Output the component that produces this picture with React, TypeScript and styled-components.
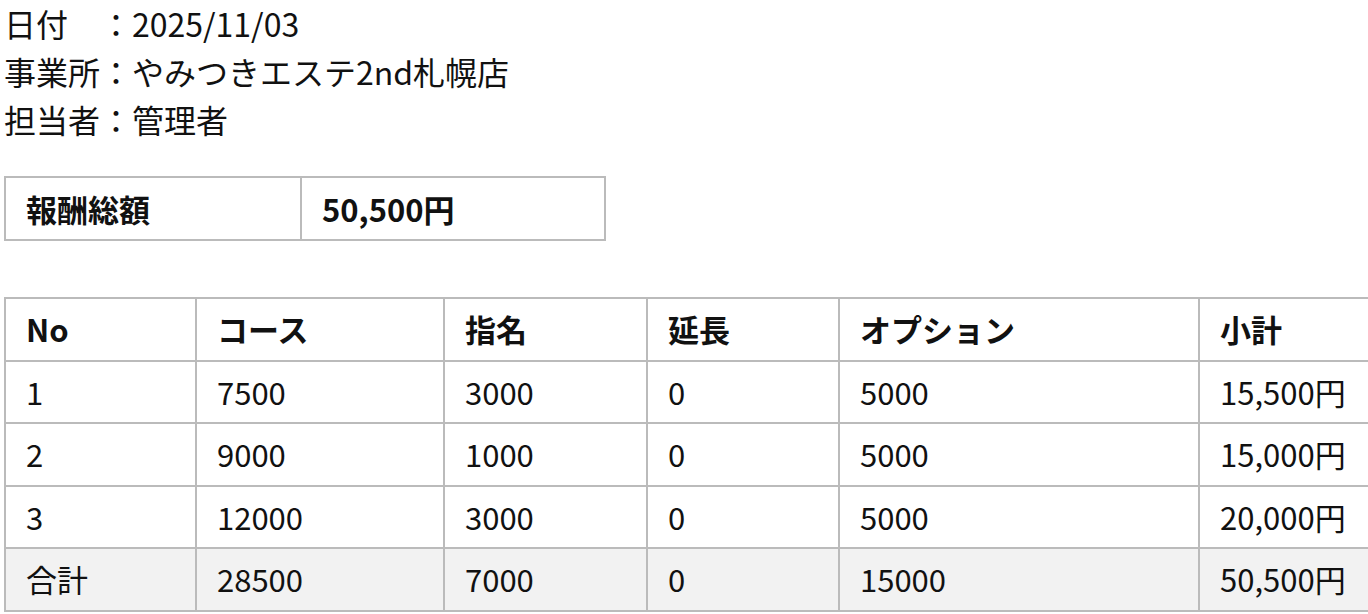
import React from "react";
import styled, { createGlobalStyle } from "styled-components";

const GlobalStyle = createGlobalStyle`
    html, body {
        margin: 0;
        padding: 0;
        background: #fff;
        overflow: hidden;
    }
    body {
        font-family: "Noto Sans CJK JP", "Noto Sans", sans-serif;
        color: #111;
        font-size: 31px;
        line-height: 1.5;
    }
`;

const rows = [
    { no: "1", course: "7500", shimei: "3000", encho: "0", option: "5000", sub: "15,500円" },
    { no: "2", course: "9000", shimei: "1000", encho: "0", option: "5000", sub: "15,000円" },
    { no: "3", course: "12000", shimei: "3000", encho: "0", option: "5000", sub: "20,000円" },
];

const widths = [191, 248, 203, 192, 360, 220];

const App = () => {
    return <>
        <GlobalStyle />
        <Page>
            <Info>
                <InfoLine>日付　：2025/11/03</InfoLine>
                <InfoLine>事業所：やみつきエステ2nd札幌店</InfoLine>
                <InfoLine>担当者：管理者</InfoLine>
            </Info>

            <SummaryTable>
                <tbody>
                    <tr>
                        <SummaryCell wide={296}>報酬総額</SummaryCell>
                        <SummaryCell wide={304}>50,500円</SummaryCell>
                    </tr>
                </tbody>
            </SummaryTable>

            <DataTable>
                <colgroup>
                    {widths.map((w, i) => <col key={i} style={{ width: w }} />)}
                </colgroup>
                <thead>
                    <tr>
                        <HeadCell>No</HeadCell>
                        <HeadCell>コース</HeadCell>
                        <HeadCell>指名</HeadCell>
                        <HeadCell>延長</HeadCell>
                        <HeadCell>オプション</HeadCell>
                        <HeadCell>小計</HeadCell>
                    </tr>
                </thead>
                <tbody>
                    {rows.map(r => (
                        <tr key={r.no}>
                            <Cell>{r.no}</Cell>
                            <Cell>{r.course}</Cell>
                            <Cell>{r.shimei}</Cell>
                            <Cell>{r.encho}</Cell>
                            <Cell>{r.option}</Cell>
                            <Cell>{r.sub}</Cell>
                        </tr>
                    ))}
                    <TotalRow>
                        <Cell>合計</Cell>
                        <Cell>28500</Cell>
                        <Cell>7000</Cell>
                        <Cell>0</Cell>
                        <Cell>15000</Cell>
                        <Cell>50,500円</Cell>
                    </TotalRow>
                </tbody>
            </DataTable>
        </Page>
    </>;
};

export default App;

const Page = styled.div`
    padding: 0 0 0 4px;
    width: 1364px;
    overflow: hidden;
`;

const Info = styled.div`
    display: flex;
    flex-direction: column;
    font-size: 32px;
`;

const InfoLine = styled.div`
    height: 48px;
    line-height: 46px;
    white-space: nowrap;
`;

const SummaryTable = styled.table`
    border-collapse: collapse;
    margin-top: 32px;
    table-layout: fixed;
`;

const SummaryCell = styled.td<{ wide: number }>`
    width: ${p => p.wide}px;
    box-sizing: border-box;
    border: 2px solid #bbb;
    padding: 7px 20px;
    font-weight: 700;
    line-height: 47px;
`;

const DataTable = styled.table`
    border-collapse: collapse;
    table-layout: fixed;
    width: 1414px;
    margin-top: 56px;
`;

const HeadCell = styled.th`
    border: 2px solid #bbb;
    padding: 7px 20px;
    text-align: left;
    font-weight: 700;
    line-height: 46.5px;
    white-space: nowrap;
`;

const Cell = styled.td`
    border: 2px solid #bbb;
    padding: 7px 20px;
    line-height: 46.5px;
    white-space: nowrap;
`;

const TotalRow = styled.tr`
    background: #f2f2f2;
`;
